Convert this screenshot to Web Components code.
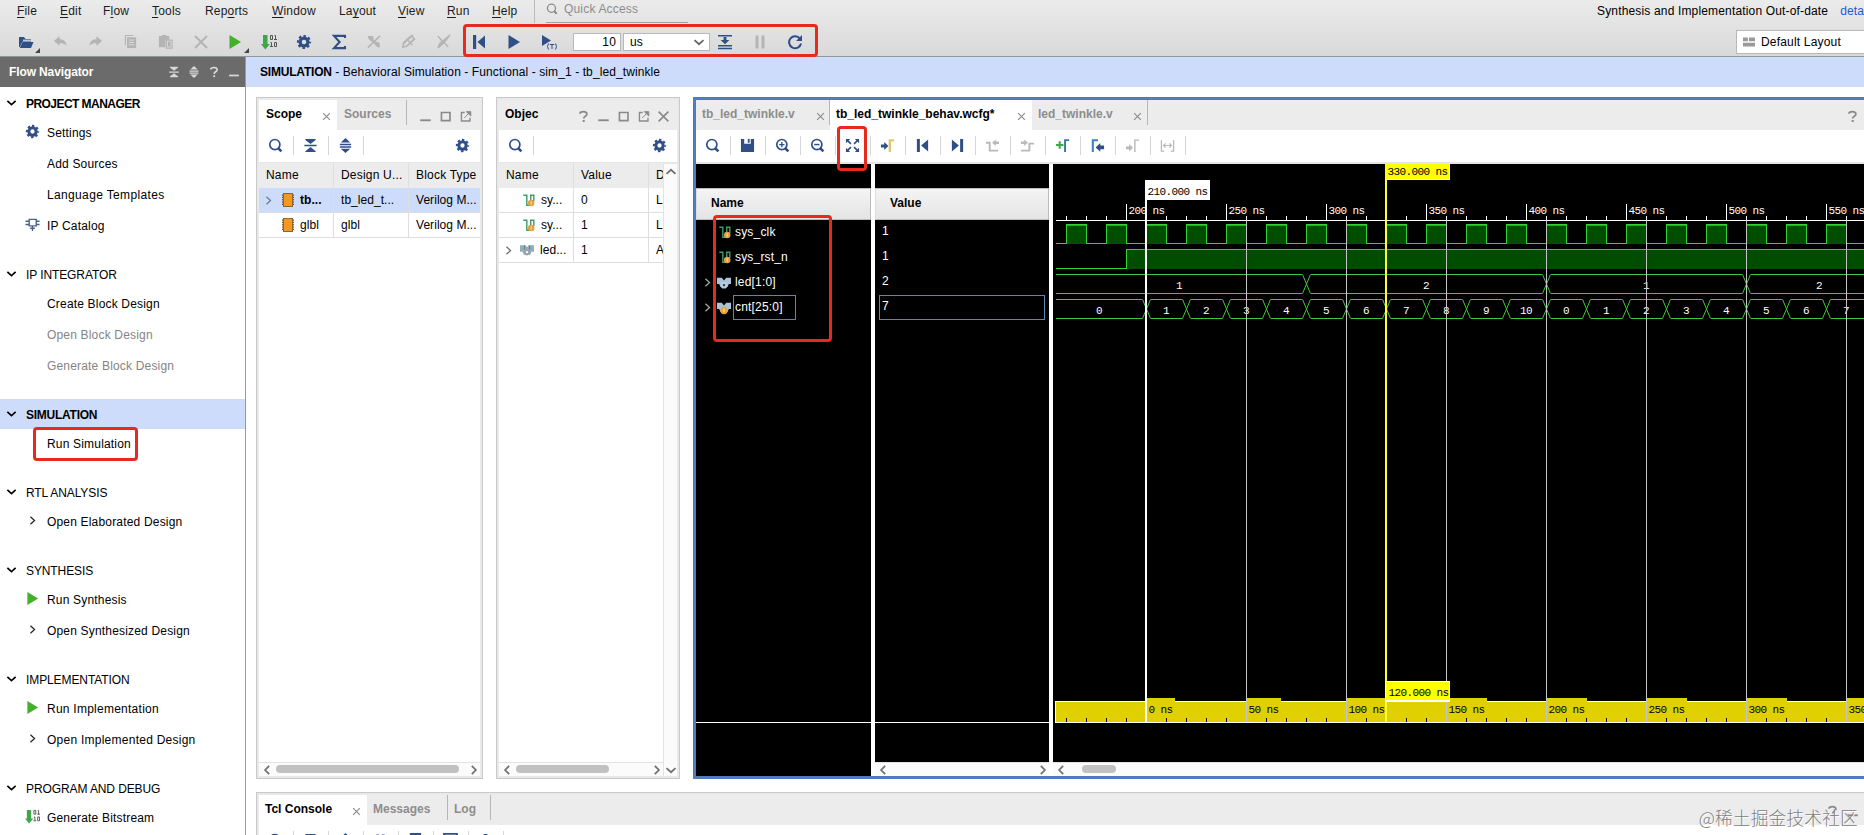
<!DOCTYPE html>
<html lang="en">
<head>
<meta charset="utf-8">
<title>tb_led_twinkle</title>
<style>
html, body {
  margin: 0;
  height: 100%;
  overflow: hidden;
}
body {
  font: 12px/14px "Liberation Sans", Arial, "Noto Sans CJK SC", sans-serif;
  letter-spacing: 0.18px;
  color: #000;
  background: #fff;
}
</style>
</head>
<body>
<sim-app></sim-app>

<script>
const NAVY = "#2f4f86";

const gear = `<circle cx="8" cy="8" r="3.9" fill="none" stroke="currentColor" stroke-width="3.2"/>
  <circle cx="8" cy="8" r="6" fill="none" stroke="currentColor" stroke-width="2.2" stroke-dasharray="2.5 2.212" stroke-dashoffset="1.25"/>`;
const lens = `<circle cx="7.3" cy="7" r="5.4" fill="none" stroke="currentColor" stroke-width="1.8"/><path d="M10.8 10.8 14.300 14.300" stroke="currentColor" stroke-width="2.8"/>`;
const bits = `<path d="M2 1h4.500v9h2.500L4.300 15.500 0 10h2z" fill="#3da84a"/>
  <g fill="none" stroke="#555" stroke-width="1"><path d="M9.500 1.500h2v4h-2zM13.500 1.500h1v4M13 5.500h3M9.500 8.500h1v4M9 12.500h3M13.500 8.500h2v4h-2z"/></g>`;
const chip = `<rect x="3.500" y="1.500" width="9" height="13" fill="#f39a1e" stroke="#8d6437"/><path d="M2.500 2.500v11.500M13.500 2.500v11.500" stroke="#6d5240" stroke-dasharray="1.300 1"/>`;

const ICONS = {
  open: `<path d="M1 13V3h5l1.500 2H13v2.500H4.500L1.800 13z" fill="${NAVY}"/><path d="M5 6.200h8" stroke="#fff"/><path d="M4.500 8H15.500L13 14H1.800z" fill="${NAVY}"/>`,
  undo: `<path d="M7 2.500v3c4.500 0 7 2.500 7.500 7C12.500 10.300 10.500 9.500 7 9.500v3L1 7.500z" fill="currentColor"/>`,
  redo: `<path d="M9 2.500v3c-4.500 0-7 2.500-7.500 7C3.500 10.300 5.500 9.500 9 9.500v3l6-5z" fill="currentColor"/>`,
  copy: `<path d="M2 1h9v1.200H3.200V12H2z" fill="currentColor"/><path d="M4.300 3.500H14V15H4.300z" fill="currentColor"/><path d="M6 6.500h6M6 9h6M6 11.500h6" stroke="#ddd"/>`,
  paste: `<path d="M1 2h3V1h5v1h3v4H8v8H1z" fill="currentColor"/><path d="M9 6.500h6V15H9z" fill="none" stroke="currentColor" stroke-width="1.200"/><path d="M10.500 8h3v5.500h-3z" fill="currentColor"/>`,
  cross: `<path d="M2 2l12 12M14 2 2 14" stroke="currentColor" stroke-width="2"/>`,
  play: `<path d="M2.500 1 14 8 2.500 15z" fill="currentColor"/>`,
  bits, gear, lens, chip,
  sigma: `<path d="M14 4V1.900H3L8.600 8 3 14.100H14V12" fill="none" stroke="currentColor" stroke-width="2.100"/>`,
  dis1: `<path d="M2 14.500 15 2" stroke="currentColor" stroke-width="1.600"/><path d="M2 2h5l1.500 3L6 8 3.500 6zM9 8l5 1 1 5-4-1-2-3z" fill="currentColor"/><path d="M3 3 14 14" stroke="currentColor" stroke-width="2.200"/>`,
  dis2: `<path d="M2 14 3 9 11 2l3 3-8 8z" fill="none" stroke="currentColor" stroke-width="1.600"/><path d="M2 11 13 1M5 14 15 5M6 5l6 7" stroke="currentColor" stroke-width="1.400"/>`,
  dis3: `<path d="M2 2l4 5 3 2 4 5M15 1 8 10l-6 5 2-5z" fill="currentColor" stroke="currentColor" stroke-width="1.500"/>`,
  prev: `<path d="M2 1h3.200v14H2zM14 1.500v13L6.500 8z" fill="currentColor"/>`,
  next: `<path d="M10.800 1H14v14h-3.200zM2 1.500v13L9.500 8z" fill="currentColor"/>`,
  playT: `<path d="M1 1l9 5.500L1 12z" fill="currentColor"/><g fill="none" stroke="currentColor"><path d="M7.500 9.500q-2 3 0 6M14.500 9.500q2 3 0 6M8.800 10.500h4.400M11 10.500v4.500"/></g>`,
  runFor: `<path d="M1 1.700h14M1 11.700h14M1 14.400h14" stroke="currentColor" stroke-width="1.500"/><path d="M6.600 3h2.800v3h3L8 10.300 3.600 6h3z" fill="currentColor"/>`,
  pause: `<path d="M3.500 1.500h3v13h-3zM9.500 1.500h3v13h-3z" fill="currentColor"/>`,
  reload: `<path d="M13 4.800A6 6 0 1 0 14 9.500" fill="none" stroke="currentColor" stroke-width="2"/><path d="M15 1v6H9z" fill="currentColor"/>`,
  collapse: `<path d="M2.500 1h11v1L8 6.300 2.500 2zM1.500 7.200h13v1.700h-13zM2.500 15h11v-1L8 9.700 2.500 14z" fill="currentColor"/>`,
  expand: `<path d="M8 0l5 4.800H3zM2 6h12v1.600H2zM2 8.700h12v1.600H2zM8 16l5-4.600H3z" fill="currentColor"/>`,
  help: `<path d="M3.600 4.700C3.600 1 12.200 1 12.200 5c0 2.700-4 2.600-4 5.500" fill="none" stroke="currentColor" stroke-width="2.200"/><path d="M7 12.300h2.500v2.500H7z" fill="currentColor"/>`,
  mini: `<path d="M1.500 11.500h13v2.300h-13z" fill="currentColor"/>`,
  maxi: `<path d="M3 3h10.500v10H3z" fill="none" stroke="currentColor" stroke-width="2"/>`,
  float: `<path d="M7 3H3v10.500h10.500V9.500" fill="none" stroke="currentColor" stroke-width="1.700"/><path d="M9 2h5.500v5.500zM6.500 9.800 13 3" fill="currentColor" stroke="currentColor" stroke-width="1.200"/>`,
  down: `<path d="M2 5.500 8 11l6-5.500" fill="none" stroke="currentColor" stroke-width="2.400"/>`,
  up: `<path d="M2 10.500 8 5l6 5.500" fill="none" stroke="currentColor" stroke-width="2.400"/>`,
  right: `<path d="M5 2.500 11 8l-6 5.500" fill="none" stroke="currentColor" stroke-width="1.800"/>`,
  left: `<path d="M11 2.500 5 8l6 5.500" fill="none" stroke="currentColor" stroke-width="1.800"/>`,
  scrollLeft: `<path d="M11.500 1.500 5 8l6.500 6.500" fill="none" stroke="currentColor" stroke-width="2.800"/>`,
  scrollRight: `<path d="M4.500 1.500 11 8l-6.500 6.500" fill="none" stroke="currentColor" stroke-width="2.800"/>`,
  ip: `<path d="M4.500 2.500h7.500v7H4.500zM.500 4.500h4M.500 8h4M12 4.500h3.500M12 8h3.500M8 9.500v5.500M5.500 12h5" fill="none" stroke="#4c6391" stroke-width="1.500"/>`,
  save: `<path d="M1 1h3.500v5h7V1H15v14H1zM8.300 1h2v4h-2z" fill="currentColor"/>`,
  table: `<path d="M1 1h14v14H1zM1 6h14M1 10.500h14M8 6v9" fill="none" stroke="currentColor" stroke-width="1.800"/>`,
  trash: `<path d="M6 1h4v2H6zM2 3h12v2H2zM3.500 6h9v9h-9z" fill="currentColor"/>`,
  page: `<path d="M3 1h10v14H3z" fill="none" stroke="currentColor" stroke-width="2"/>`,
  zoomIn: `${lens}<path d="M4.500 7h5.600M7.300 4.200v5.600" stroke="currentColor" stroke-width="1.400"/>`,
  zoomOut: `${lens}<path d="M4.500 7h5.600" stroke="currentColor" stroke-width="1.600"/>`,
  fit: `<path d="M1 1h4.500L1 5.500zM15 1h-4.500L15 5.500zM1 15h4.500L1 10.500zM15 15h-4.500l4.500-4.500z" fill="currentColor"/><path d="M2 2l4.300 4.300M14 2 9.700 6.300M2 14l4.300-4.300M14 14 9.700 9.700" stroke="currentColor" stroke-width="1.700"/>`,
  toCursor: `<path d="M1 7h3.500V4.300L9 8.500l-4.500 4.200V10H1z" fill="${NAVY}"/><path d="M10.500 15V2.500H15" fill="none" stroke="#e2c66a" stroke-width="2.500"/>`,
  prevEdge: `<path d="M1 5h4v8.500h9" fill="none" stroke="currentColor" stroke-width="2"/><path d="M15 3.800h-3.500V1.500L7.500 5l4 3.500V6.300H15z" fill="currentColor"/>`,
  nextEdge: `<path d="M1 13.500h9V6h5" fill="none" stroke="currentColor" stroke-width="2"/><path d="M1 3.800h3.500V1.500L8.500 5l-4 3.500V6.300H1z" fill="currentColor"/>`,
  addMark: `<path d="M1 7.500h8M5 3.500v8" stroke="#3da84a" stroke-width="2.200"/><path d="M10.700 15V2.300H15" fill="none" stroke="#2f78a8" stroke-width="2"/>`,
  markL: `<path d="M3 15V2.300h5.500" fill="none" stroke="#3b82c0" stroke-width="2.200"/><path d="M15 8h-4V5.200L6 10l5 4.700V12h4z" fill="${NAVY}"/>`,
  markR: `<path d="M1 9h3.500V6.500L8.500 10.500l-4 4V12H1z" fill="currentColor"/><path d="M10.500 15V2.300H15" fill="none" stroke="currentColor" stroke-width="1.500"/>`,
  measure: `<path d="M1.500 2v12h3M14.500 2v12h-3M4 8h8M6 5.800 3.800 8 6 10.200M10 5.800 12.200 8 10 10.200" fill="none" stroke="currentColor" stroke-width="1.300"/>`,
  layout: `<path d="M0 2h6.500v5H0zM8 2h8v5H8zM0 9h16v5H0z" fill="currentColor"/>`,
  signal: `<path d="M1.500 2.500h4V14H9M10 10V2.500h3.500V9" fill="none" stroke="#3d9c63" stroke-width="1.600"/><circle cx="10.500" cy="11.500" r="3.700" fill="#e39f45"/><path d="M10.500 9.500v4" stroke="#fbdf9c" stroke-width="1.200"/>`,
  bus: `<path d="M0 2.500h6l2 2 2-2h6V10h-3l-1 3H4l-1-3H0z" fill="#8fb0bb"/><path d="M5 2.500v5M11 2.500v5" stroke="#55737f"/><circle cx="8" cy="10.500" r="3.700" fill="#9aa5ab"/><circle cx="8" cy="10.500" r="1.300" fill="#fff"/>`,
  busDark: `<path d="M0 2h5.500L8 5l2.500-3H16v7h-2.500l-1.500 3.500H4L2.500 9H0z" fill="#a8c4dc"/><circle cx="8" cy="10.500" r="3.900" fill="#b9cbe0"/><circle cx="8" cy="10.500" r="1.300" fill="#333"/>`,
  busReg: `<path d="M0 2h5.500L8 5l2.500-3H16v7h-2.500l-1.500 3.500H4L2.500 9H0z" fill="#a8c4dc"/><circle cx="8" cy="10.800" r="4.200" fill="#eca338"/><path d="M8 8.500v4" stroke="#fbe3a6" stroke-width="1.400"/>`
};

// Registers an element whose shadow root is a fixed piece of markup.
function define(name, html) {
  const template = document.createElement("template");
  template.innerHTML = html;
  customElements.define(name, class extends HTMLElement {
    constructor() {
      super();
      this.attachShadow({ mode: "open" });
      this.shadowRoot.appendChild(template.content.cloneNode(true));
    }
  });
}

class UiIcon extends HTMLElement {
  constructor() {
    super();
    this.attachShadow({ mode: "open" });
  }
  connectedCallback() {
    const size = this.getAttribute("size") || 16;
    this.shadowRoot.innerHTML = `
      <style>
        :host { display: inline-flex; flex: none; width: ${size}px; height: ${size}px; }
        svg { display: block; }
      </style>
      <svg width="${size}" height="${size}" viewBox="0 0 16 16">${ICONS[this.getAttribute("name")]}</svg>`;
  }
}
customElements.define("ui-icon", UiIcon);

// Rectangular highlight drawn over whatever holds it.
define("mark-box", `
<style>
:host {
  position: absolute;
  box-sizing: border-box;
  border: 3px solid #e62a1d;
  border-radius: 4px;
  z-index: 5;
  pointer-events: none;
}
</style>`);

define("menu-bar", `
<style>
:host { display: flex; height: 26px; align-items: flex-start; position: relative; color: #1c1c1c; }
nav { display: grid; grid-template-columns: 43px 43px 49px 53px 67px 67px 59px 49px 45px 42px; padding: 4px 0 0 17px; }
u { text-underline-offset: 2px; }
.quick { display: flex; align-items: center; box-sizing: border-box; height: 23px; width: 142px; margin-left: 11px; padding-bottom: 5px; border-bottom: 1px solid #a0a0a0; color: #8c8c8c; gap: 6px; }
.sep { width: 1px; height: 23px; background: #bbb; }
.status { margin: 4px 0 0 auto; white-space: nowrap; width: 267px; display: flex; gap: 12px; color: #000; letter-spacing: 0.16px; }
.status a { color: #2459d8; }
</style>
<nav>
  <span><u>F</u>ile</span><span><u>E</u>dit</span><span>F<u>l</u>ow</span><span><u>T</u>ools</span><span>Rep<u>o</u>rts</span>
  <span><u>W</u>indow</span><span>La<u>y</u>out</span><span><u>V</u>iew</span><span><u>R</u>un</span><span><u>H</u>elp</span>
</nav>
<div class="sep"></div>
<div class="quick"><ui-icon name="lens" size="12"></ui-icon><span>Quick Access</span></div>
<div class="status"><span>Synthesis and Implementation Out-of-date</span><a>details</a></div>`);

define("main-toolbar", `
<style>
:host { display: flex; align-items: center; height: 31px; padding-left: 8px; color: #2f4f86; position: relative; }
i { display: flex; justify-content: center; width: 35px; flex: none; position: relative; }
.off { color: #b4b4b4; }
.go { color: #43b02a; margin-left: -1px; }
.go ~ i { left: -1px; }
.drop::after { content: ""; position: absolute; right: 3px; bottom: -3px; border: solid transparent; border-width: 5px 0 0 5px; border-right: 0; width: 0; height: 0; border-bottom: 5px solid #444; border-top: 0; }
.field { box-sizing: border-box; border: 1px solid #b8b8b8; background: #fff; height: 18px; color: #000; display: flex; align-items: center; }
.num { width: 48px; margin-left: 6px; justify-content: flex-end; padding-right: 4px; }
.unit { width: 87px; margin: 0 -2px 0 2px; padding: 0 4px 0 6px; justify-content: space-between; }
.unit ui-icon { color: #666; }
.layout { box-sizing: border-box; margin: 0 0 0 auto; width: 128px; height: 24px; border: 1px solid #b8b8b8; border-right: 0; background: #fff; color: #000; display: flex; align-items: center; gap: 6px; padding-left: 6px; }
.layout ui-icon { color: #999; }
mark-box { left: 463px; top: -2px; width: 355px; height: 33px; }
</style>
<i class="drop"><ui-icon name="open"></ui-icon></i>
<i class="off"><ui-icon name="undo" size="15"></ui-icon></i>
<i class="off"><ui-icon name="redo" size="15"></ui-icon></i>
<i class="off"><ui-icon name="copy" size="15"></ui-icon></i>
<i class="off"><ui-icon name="paste" size="15"></ui-icon></i>
<i class="off"><ui-icon name="cross"></ui-icon></i>
<i class="go drop"><ui-icon name="play"></ui-icon></i>
<i><ui-icon name="bits"></ui-icon></i>
<i><ui-icon name="gear"></ui-icon></i>
<i><ui-icon name="sigma"></ui-icon></i>
<i class="off"><ui-icon name="dis1" size="15"></ui-icon></i>
<i class="off"><ui-icon name="dis2" size="15"></ui-icon></i>
<i class="off"><ui-icon name="dis3" size="15"></ui-icon></i>
<i><ui-icon name="prev"></ui-icon></i>
<i><ui-icon name="play"></ui-icon></i>
<i><ui-icon name="playT"></ui-icon></i>
<span class="field num">10</span>
<span class="field unit">us<ui-icon name="down" size="12"></ui-icon></span>
<i><ui-icon name="runFor"></ui-icon></i>
<i class="off"><ui-icon name="pause"></ui-icon></i>
<i><ui-icon name="reload"></ui-icon></i>
<span class="layout"><ui-icon name="layout" size="12"></ui-icon>Default Layout</span>
<mark-box></mark-box>`);

class NavSection extends HTMLElement {
  constructor() {
    super();
    this.attachShadow({ mode: "open" });
    this.shadowRoot.innerHTML = `
      <style>
        :host { display: block; margin-bottom: 17px; }
        header { display: flex; align-items: center; height: 30px; padding-left: 6px; letter-spacing: -0.1px; }
        header ui-icon { margin: 0 9px 2px 0; }
        header span { padding-top: 2px; }
        :host([bold]) header { font-weight: bold; letter-spacing: -0.55px; }
        :host([active]) header { background: #cddcfb; letter-spacing: -0.25px; }
      </style>
      <header><ui-icon name="down" size="11"></ui-icon><span></span></header>
      <slot></slot>`;
  }
  connectedCallback() {
    this.shadowRoot.querySelector("span").textContent = this.getAttribute("label");
  }
}
customElements.define("nav-section", NavSection);

class NavItem extends HTMLElement {
  constructor() {
    super();
    this.attachShadow({ mode: "open" });
  }
  connectedCallback() {
    const icon = this.getAttribute("icon");
    const size = icon === "right" ? 11 : 15;
    this.shadowRoot.innerHTML = `
      <style>
        :host { display: grid; grid-template-columns: 28px 1fr; height: 29px; padding: 0 0 2px 19px; align-items: center; position: relative; }
        :host([disabled]) { color: #848484; }
        i { display: flex; justify-content: center; margin: -3px 0 0 -1px; color: #2f4f86; }
        .play { color: #43b02a; }
        .right { color: #222; }
      </style>
      <i class="${icon || ""}">${icon ? `<ui-icon name="${icon}" size="${size}"></ui-icon>` : ""}</i>
      <span><slot></slot></span>`;
  }
}
customElements.define("nav-item", NavItem);

define("flow-navigator", `
<style>
:host { display: block; width: 245px; border-right: 1px solid #999; overflow: hidden; flex: none; }
.head { display: flex; align-items: center; height: 30px; margin-bottom: 1px; padding: 0 5px 0 9px; background: #6b6b6b; color: #fff; font-weight: bold; letter-spacing: -0.12px; gap: 8px; }
.head span { flex: 1; }
.head ui-icon { color: #d8d8d8; }
.run { position: relative; }
mark-box { left: 33px; top: -2px; width: 105px; height: 34px; }
</style>
<div class="head"><span>Flow Navigator</span><ui-icon name="collapse" size="12"></ui-icon><ui-icon name="expand" size="12"></ui-icon><ui-icon name="help" size="12"></ui-icon><ui-icon name="mini" size="12"></ui-icon></div>
<nav-section label="PROJECT MANAGER" bold>
  <nav-item icon="gear">Settings</nav-item>
  <nav-item>Add Sources</nav-item>
  <nav-item style="letter-spacing:0.35px">Language Templates</nav-item>
  <nav-item icon="ip">IP Catalog</nav-item>
</nav-section>
<nav-section label="IP INTEGRATOR">
  <nav-item>Create Block Design</nav-item>
  <nav-item disabled>Open Block Design</nav-item>
  <nav-item disabled>Generate Block Design</nav-item>
</nav-section>
<nav-section label="SIMULATION" bold active>
  <div class="run"><nav-item>Run Simulation</nav-item><mark-box></mark-box></div>
</nav-section>
<nav-section label="RTL ANALYSIS">
  <nav-item icon="right">Open Elaborated Design</nav-item>
</nav-section>
<nav-section label="SYNTHESIS">
  <nav-item icon="play">Run Synthesis</nav-item>
  <nav-item icon="right">Open Synthesized Design</nav-item>
</nav-section>
<nav-section label="IMPLEMENTATION">
  <nav-item icon="play" style="letter-spacing:0.25px">Run Implementation</nav-item>
  <nav-item icon="right" style="letter-spacing:0.25px">Open Implemented Design</nav-item>
</nav-section>
<nav-section label="PROGRAM AND DEBUG">
  <nav-item icon="bits">Generate Bitstream</nav-item>
</nav-section>`);

// Frame of a docked window: tabs, tools and body are slotted.
define("dock-panel", `
<style>
:host { display: flex; flex-direction: column; box-sizing: border-box; border: 1px solid #c9c9c9; background: #fff; overflow: hidden; min-width: 0; }
.in { display: flex; flex-direction: column; flex: 1; min-height: 0; border: 2px solid #e9e9e9; }
:host([focused]) { border: 3px solid #4f7cba; border-right: 0; }
:host([focused]) .in { border: 0; }
:host([docked]) { border-right: 0; border-bottom: 0; }
:host([docked]) .in { border-right: 0; border-bottom: 0; }
.tabs { display: flex; height: 30px; flex: none; background: #ececec; }
.tools { display: flex; height: 32px; flex: none; border-bottom: 2px solid #e6e6e6; }
.body { display: flex; flex-direction: column; flex: 1; min-height: 0; }
</style>
<div class="in">
  <div class="tabs"><slot name="tabs"></slot></div>
  <div class="tools"><slot name="tools"></slot></div>
  <div class="body"><slot></slot></div>
</div>`);

define("dock-tab", `
<style>
:host { display: flex; box-sizing: border-box; height: 30px; padding: 0 6px 0 6px; justify-content: space-between; align-items: flex-start; font-weight: bold; color: #8d8d8d; white-space: nowrap; letter-spacing: 0; flex: none; position: relative; }
:host([active]) { background: #fff; color: #000; }
:host([sep])::after { content: ""; position: absolute; right: 0; top: 0; width: 1px; height: 25px; background: #b5b5b5; }
span { padding-top: 7px; }
ui-icon { margin-top: 11.5px; color: #8a8a8a; display: none; }
:host([closable]) ui-icon { display: inline-flex; }
</style>
<span><slot></slot></span><ui-icon name="cross" size="9"></ui-icon>`);

class WindowButtons extends HTMLElement {
  constructor() {
    super();
    this.attachShadow({ mode: "open" });
  }
  connectedCallback() {
    const names = this.getAttribute("icons").split(" ");
    this.shadowRoot.innerHTML = `
      <style>:host { display: flex; gap: 7px; margin: 9.5px 0 0 auto; color: #8a8a8a; }</style>
      ${names.map((n) => `<ui-icon name="${n}" size="13"></ui-icon>`).join("")}`;
  }
}
customElements.define("window-buttons", WindowButtons);

// icons: space separated names; a leading "-" draws the tool disabled.
class ToolStrip extends HTMLElement {
  constructor() {
    super();
    this.attachShadow({ mode: "open" });
  }
  connectedCallback() {
    const names = this.getAttribute("icons").split(" ");
    this.shadowRoot.innerHTML = `
      <style>
        :host { display: flex; flex: 1; color: #2f4f86; padding-top: 6px; position: relative; }
        i { display: flex; justify-content: center; align-items: center; box-sizing: border-box; width: 35px; height: 19px; padding-right: 1px; border-right: 1px solid #d6d6d6; flex: none; }
        .off { color: #b9b9b9; }
        .end { border: 0; margin-left: auto; }
      </style>
      ${names.map((n) => `<i class="${n[0] === "-" ? "off" : ""}"><ui-icon name="${n.replace("-", "")}" size="15"></ui-icon></i>`).join("")}
      ${this.hasAttribute("settings") ? `<i class="end"><ui-icon name="gear" size="15"></ui-icon></i>` : ""}
      <slot></slot>`;
  }
}
customElements.define("tool-strip", ToolStrip);

class ScrollBar extends HTMLElement {
  constructor() {
    super();
    this.attachShadow({ mode: "open" });
  }
  connectedCallback() {
    const end = this.hasAttribute("endless") ? "" : `<ui-icon name="scrollRight" size="10"></ui-icon>`;
    this.shadowRoot.innerHTML = `
      <style>
        :host { display: flex; align-items: center; box-sizing: border-box; height: 14px; padding: 1px 1px 0 3px; background: #fbfbfb; border-top: 1px solid #e3e3e3; color: #707070; flex: none; }
        b { width: ${this.getAttribute("thumb") || 0}px; height: 8px; border-radius: 4px; background: #c1c1c1; margin: 0 auto 2px ${this.getAttribute("offset") || 4}px; }
      </style>
      <ui-icon name="scrollLeft" size="10"></ui-icon><b></b>${end}`;
  }
}
customElements.define("scroll-bar", ScrollBar);

define("scope-panel", `
<style>
:host { display: flex; width: 227px; flex: none; }
dock-panel { flex: 1; }
.grid { display: grid; grid-template-columns: 75px 75px 71px; grid-auto-rows: 25px; flex: 1; align-content: start; margin-top: -1px; letter-spacing: 0.05px; }
.grid > * { box-sizing: border-box; border: solid #dedede; border-width: 0 1px 1px 0; padding: 0 0 0 7px; display: flex; align-items: center; white-space: nowrap; overflow: hidden; }
.h { background: #ececec; border-bottom-color: #ececec; letter-spacing: 0.2px; }
.s { background: #cddcfb; }
.n { gap: 4px; }
.n ui-icon:first-child { color: #6b7b93; margin-left: -3px; }
.last { border-right: 0; }
</style>
<dock-panel>
  <dock-tab slot="tabs" active closable style="width:78px;padding-left:7px">Scope</dock-tab>
  <dock-tab slot="tabs" sep style="width:70px;padding-left:7px">Sources</dock-tab>
  <window-buttons slot="tabs" icons="mini maxi float" style="padding-right:8px"></window-buttons>
  <tool-strip slot="tools" icons="lens collapse expand" settings></tool-strip>
  <div class="grid">
    <span class="h">Name</span><span class="h">Design U...</span><span class="h last">Block Type</span>
    <span class="s n"><ui-icon name="right" size="11"></ui-icon><ui-icon name="chip" size="16" style="margin-left:2px"></ui-icon><b>tb...</b></span><span class="s">tb_led_t...</span><span class="s last">Verilog M...</span>
    <span class="n" style="padding-left:21px"><ui-icon name="chip" size="16" style="margin:0"></ui-icon>glbl</span><span>glbl</span><span class="last">Verilog M...</span>
  </div>
  <scroll-bar thumb="183"></scroll-bar>
</dock-panel>`);

define("objects-panel", `
<style>
:host { display: flex; width: 184px; flex: none; }
dock-panel { flex: 1; }
.title { padding: 7px 0 0 6px; font-weight: bold; letter-spacing: 0; }
.row { display: flex; flex: 1; min-height: 0; }
.left { flex: 1; min-width: 0; display: flex; flex-direction: column; }
.grid { display: grid; grid-template-columns: 75px 75px 14px; grid-auto-rows: 25px; flex: 1; align-content: start; margin-top: -1px; letter-spacing: 0.05px; }
.grid > * { box-sizing: border-box; border: solid #dedede; border-width: 0 1px 1px 0; padding-left: 7px; display: flex; align-items: center; white-space: nowrap; overflow: hidden; }
.h { background: #ececec; border-bottom-color: #ececec; letter-spacing: 0.2px; }
.n { gap: 5px; padding-left: 23px; }
.n.open { padding-left: 4px; color: #000; gap: 6px; }
.open ui-icon:first-child { color: #666; }
.last { border-right: 0; }
.v { width: 14px; display: flex; flex-direction: column; justify-content: space-between; align-items: center; background: #fbfbfb; border-left: 1px solid #e3e3e3; box-sizing: border-box; color: #707070; padding: 2px 0 0; }
</style>
<dock-panel>
  <span slot="tabs" class="title">Objec</span>
  <window-buttons slot="tabs" icons="help mini maxi float cross" style="padding-right:7px"></window-buttons>
  <tool-strip slot="tools" icons="lens" settings></tool-strip>
  <div class="row">
    <div class="left">
      <div class="grid">
        <span class="h">Name</span><span class="h">Value</span><span class="h last">D</span>
        <span class="n"><ui-icon name="signal" size="14"></ui-icon>sy...</span><span>0</span><span class="last">L</span>
        <span class="n"><ui-icon name="signal" size="14"></ui-icon>sy...</span><span>1</span><span class="last">L</span>
        <span class="n open"><ui-icon name="right" size="11"></ui-icon><ui-icon name="bus" size="14"></ui-icon>led...</span><span>1</span><span class="last">A</span>
      </div>
      <scroll-bar thumb="93"></scroll-bar>
    </div>
    <div class="v"><ui-icon name="up" size="12"></ui-icon><ui-icon name="down" size="12"></ui-icon></div>
  </div>
</dock-panel>`);

// Waveform area, 2px per ns.
class WaveCanvas extends HTMLElement {
  constructor() {
    super();
    this.attachShadow({ mode: "open" });
  }

  connectedCallback() {
    this.shadowRoot.innerHTML = `
      <style>
        :host { display: block; flex: 1; min-height: 0; background: #000; overflow: hidden; }
        svg { display: block; }
        text { font: 11px "Liberation Mono", monospace; letter-spacing: -0.6px; fill: #fff; white-space: pre; }
        .dark { fill: #000; }
        .mid { text-anchor: middle; }
      </style>
      <svg width="811" height="598" shape-rendering="crispEdges">${this.draw()}</svg>`;
  }

  x(ns) {
    return 73 + (ns - 200) * 2;
  }

  text(x, y, str, cls = "") {
    return `<text x="${x}" y="${y}" class="${cls}">${str}</text>`;
  }

  bus(top, edges, labels) {
    const bottom = top + 19;
    let d = "";
    let from = 3;
    for (const edge of [...edges, 830]) {
      d += `M${from} ${top + 0.5}H${edge - 4}M${from} ${bottom + 0.5}H${edge - 4}`;
      d += `M${edge - 3.5} ${top + 0.5}L${edge + 4.5} ${bottom + 0.5}M${edge - 3.5} ${bottom + 0.5}L${edge + 4.5} ${top + 0.5}`;
      from = edge + 5;
    }
    return `<path d="${d}" fill="none" stroke="#3fc83f" shape-rendering="auto"/>` +
      labels.map(([x, s]) => this.text(x, top + 15, s, "mid")).join("");
  }

  draw() {
    let out = "";
    // time axis
    let d = "M3 56.5H811";
    for (let t = 170; t < 570; t += 10) {
      d += `M${this.x(t) + 0.5} ${t % 50 ? 52 : 40}V56`;
    }
    out += `<path d="${d}" stroke="#fff"/>`;
    for (let t = 200; t <= 550; t += 50) {
      out += this.text(this.x(t) + 2.5, 50, `${t} ns`);
    }
    // sys_clk
    d = "M3 79.5";
    for (let t = 170; t < 570; t += 20) {
      const x = this.x(t);
      out += `<rect x="${x}" y="60" width="20" height="20" fill="#004d00"/><rect x="${x}" y="60" width="21" height="2" fill="#12b312"/>`;
      d += `H${x + 0.5}V60.500H${x + 20.5}V79.500`;
    }
    out += `<path d="${d}H811" fill="none" stroke="#35d035"/>`;
    // sys_rst_n
    out += `<rect x="73" y="85" width="738" height="20" fill="#004d00"/><rect x="73" y="85" width="738" height="1" fill="#2bbd2b"/>
      <path d="M3 104.500H73.500V85.500H811" fill="none" stroke="#35d035"/>`;
    // buses
    out += this.bus(110, [253, 493, 693], [[126, "1"], [373, "2"], [593, "1"], [766, "2"]]);
    const edges = [];
    const values = [[46, "0"]];
    for (let i = 0; i < 18; i++) {
      edges.push(93 + i * 40);
      values.push([113 + i * 40, String((i + 1) % 11)]);
    }
    out += this.bus(135, edges, values);
    // floating ruler
    out += `<rect x="3" y="538" width="808" height="20" fill="#e0d000"/><path d="M2.500 558V537.500H811M2 558.500H811" fill="none" stroke="#fff"/>`;
    for (let x = 13; x < 811; x += 20) {
      out += `<rect x="${x}" y="554" width="1" height="4" fill="#000"/>`;
    }
    for (let i = 0; i < 8; i++) {
      const label = `${i * 50} ns`;
      const x = 93 + i * 100;
      out += `<rect x="${x}" y="534" width="${label.length * 6 + 5}" height="10" fill="#e0d000"/>`;
      if (i) {
        out += `<rect x="${x}" y="56" width="1" height="502" fill="#c4c4c4"/>`;
      }
      out += this.text(x + 2.5, 549, label, "dark");
    }
    // markers
    out += `<rect x="92" y="16" width="2" height="542" fill="#fff"/><rect x="92" y="16" width="65" height="20" fill="#fff"/>
      ${this.text(94.5, 31, "210.000 ns", "dark")}
      <rect x="332" y="0" width="2" height="558" fill="#ffff30"/><rect x="332" y="0" width="65" height="16" fill="#ffffb0"/><rect x="332" y="0" width="64" height="15" fill="#ffff00"/>
      ${this.text(334.5, 11, "330.000 ns", "dark")}
      <rect x="332" y="517" width="65" height="21" fill="#fff"/><rect x="333" y="518" width="63" height="18" fill="#ffff00"/>
      ${this.text(335.5, 532, "120.000 ns", "dark")}`;
    return out;
  }
}
customElements.define("wave-canvas", WaveCanvas);

define("wave-window", `
<style>
:host { display: flex; flex: 1; min-width: 0; }
dock-panel { flex: 1; }
tool-strip mark-box { left: 141px; top: -4px; width: 30px; height: 45px; }
.cols { display: grid; grid-template-columns: 175px 174px 811px; gap: 4px; flex: 1; min-height: 0; position: relative; }
.col { display: flex; flex-direction: column; background: #000; color: #fff; min-height: 0; }
.h { box-sizing: border-box; height: 32px; margin-top: 24px; padding: 7px 0 0 14px; background: linear-gradient(#f4f4f4, #e4e4e4); border: 1px solid #bbb; border-left-color: #ddd; color: #000; font-weight: bold; letter-spacing: 0; flex: none; }
.r { height: 25px; display: flex; align-items: center; gap: 3px; padding-left: 22px; flex: none; box-sizing: border-box; padding-bottom: 2px; }
.r.sub { padding-left: 6px; gap: 4px; color: #fff; padding-bottom: 0; }
.sub span { padding-bottom: 2px; }
.sub ui-icon:first-child { color: #aaa; }
.r em, .val em { font-style: normal; box-sizing: border-box; height: 25px; border: 1px solid #5d87ad; display: flex; align-items: center; padding-bottom: 2px; }
.r em { width: 63px; margin-left: -2px; padding-left: 1px; margin-right: -3px; }
.val { height: 25px; line-height: 23px; padding-left: 7px; flex: none; }
.val em { margin: 0 4px 0 -3px; padding-left: 2px; }
.rest { flex: 1; display: flex; align-items: flex-end; }
.rest::after { content: ""; flex: 1; height: 1px; background: #fff; margin-bottom: 39px; }
.name .rest::after { margin-bottom: 53px; }
.cols > mark-box { left: 17px; top: 51px; width: 119px; height: 127px; }
</style>
<dock-panel focused>
  <dock-tab slot="tabs" closable sep style="width:134px;padding-right:5px">tb_led_twinkle.v</dock-tab>
  <dock-tab slot="tabs" active closable style="width:202px">tb_led_twinkle_behav.wcfg*</dock-tab>
  <dock-tab slot="tabs" closable sep style="width:116px">led_twinkle.v</dock-tab>
  <window-buttons slot="tabs" icons="help" style="padding-right:5px"></window-buttons>
  <tool-strip slot="tools" icons="lens save zoomIn zoomOut fit toCursor prev next -prevEdge -nextEdge addMark markL -markR -measure"><mark-box></mark-box></tool-strip>
  <div class="cols">
    <div class="col name">
      <div class="h">Name</div>
      <div class="r"><ui-icon name="signal" size="14"></ui-icon>sys_clk</div>
      <div class="r"><ui-icon name="signal" size="14"></ui-icon>sys_rst_n</div>
      <div class="r sub"><ui-icon name="right" size="11"></ui-icon><ui-icon name="busDark" size="14"></ui-icon><span>led[1:0]</span></div>
      <div class="r sub"><ui-icon name="right" size="11"></ui-icon><ui-icon name="busReg" size="14"></ui-icon><em>cnt[25:0]</em></div>
      <div class="rest"></div>
    </div>
    <div class="col">
      <div class="h">Value</div>
      <div class="val">1</div>
      <div class="val">1</div>
      <div class="val">2</div>
      <div class="val"><em>7</em></div>
      <div class="rest"></div>
      <scroll-bar></scroll-bar>
    </div>
    <div class="col">
      <wave-canvas></wave-canvas>
      <scroll-bar endless thumb="34" offset="16"></scroll-bar>
    </div>
    <mark-box></mark-box>
  </div>
</dock-panel>`);

define("console-panel", `
<style>
:host { display: flex; height: 43px; position: relative; flex: none; overflow: hidden; }
dock-panel { flex: 1; height: 80px; }
.stamp { position: absolute; right: 6px; bottom: 7px; font: 300 17.800px/22px "Noto Sans CJK SC", sans-serif; letter-spacing: 0.1px; color: #808080; text-shadow: 1px 1px 0 #fff; white-space: nowrap; }
</style>
<dock-panel docked>
  <dock-tab slot="tabs" active closable style="width:108px">Tcl Console</dock-tab>
  <dock-tab slot="tabs" sep style="width:81px">Messages</dock-tab>
  <dock-tab slot="tabs" sep style="width:43px">Log</dock-tab>
  <window-buttons slot="tabs" icons="help mini" style="padding-right:5px"></window-buttons>
  <tool-strip slot="tools" icons="lens collapse expand pause page table trash"></tool-strip>
</dock-panel>
<div class="stamp">@稀土掘金技术社区</div>`);

define("sim-app", `
<style>
:host { display: flex; flex-direction: column; height: 100vh; overflow: hidden; }
.top { background: linear-gradient(#ebebeb, #d9d9d9); height: 56px; border-bottom: 1px solid #8d999b; flex: none; }
.work { display: flex; flex: 1; min-height: 0; }
main { flex: 1; min-width: 0; display: flex; flex-direction: column; }
.banner { height: 30px; box-sizing: border-box; padding: 8px 0 0 14px; background: #cddcfb; flex: none; letter-spacing: 0.1px; }
.banner b { letter-spacing: -0.2px; }
.docks { display: flex; height: 682px; gap: 13px; margin: 10px 0 13px 10px; flex: none; }
console-panel { margin-left: 10px; }
</style>
<div class="top"><menu-bar></menu-bar><main-toolbar></main-toolbar></div>
<div class="work">
  <flow-navigator></flow-navigator>
  <main>
    <div class="banner"><b>SIMULATION</b> - Behavioral Simulation - Functional - sim_1 - tb_led_twinkle</div>
    <div class="docks">
      <scope-panel></scope-panel>
      <objects-panel></objects-panel>
      <wave-window></wave-window>
    </div>
    <console-panel></console-panel>
  </main>
</div>`);
</script>
</body>
</html>
